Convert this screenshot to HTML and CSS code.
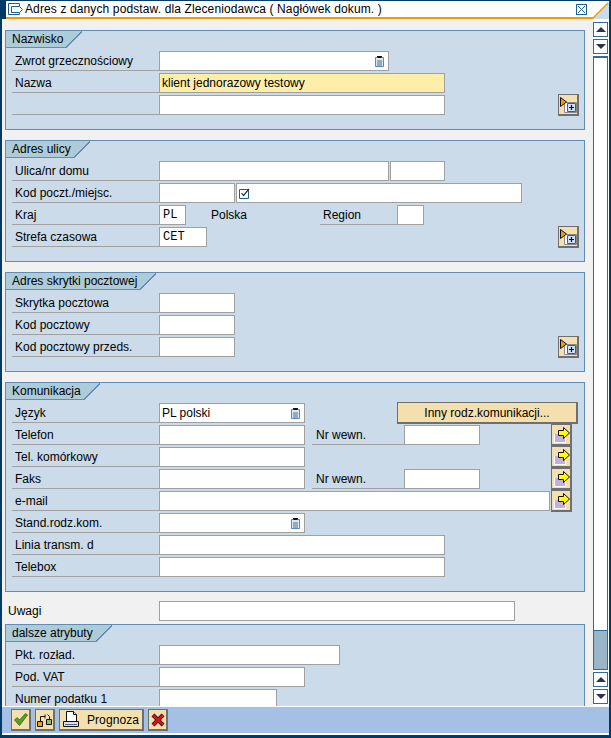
FILE: index.html
```html
<!DOCTYPE html>
<html lang="pl">
<head>
    <meta charset="UTF-8">
    <title>Adres z danych podstaw.</title>
    <link rel="stylesheet" href="styles.css">
</head>
<body>
<svg class="defs" width="0" height="0">
    <symbol id="i-f4" viewBox="0 0 9 11">
        <path d="M.5 1.500h8v9h-8z" fill="#dce8f4" stroke="#5a8ab8"/>
        <path d="M2 5h5M2 7h5M2 9h5" stroke="#4a7096"/>
        <path d="M2 0h5v1l-1 1H3L2 1z" fill="#111"/>
    </symbol>
    <symbol id="i-more" viewBox="0 0 17 16">
        <path d="M4.500 5.500h12v10h-12z" fill="#fff" stroke="#8a8a8a"/>
        <path d="M7.500 6.500h8v8h-8z" fill="#cfe0f2" stroke="#2c5f9e"/>
        <path d="M11.500 8v5M9 10.500h5" stroke="#00008b" stroke-width="1.200"/>
        <path d="M.5 .5l6 4.500-6 4.500z" fill="#f59b00" stroke="#111"/>
    </symbol>
    <symbol id="i-jump" viewBox="0 0 17 17">
        <path d="M1 8h12v9H1z" fill="#fff"/>
        <path d="M2 8h10v8H2z" fill="#c4b0dc"/>
        <path d="M5.500 4.500h5V1.500l6 5.500-6 5.500V9.500h-5z" fill="#ffff00" stroke="#111"/>
    </symbol>
</svg>

<div class="window">
    <div class="titlebar">
        <div class="title-edge"></div>
        <svg class="title-icon" width="16" height="13" viewBox="0 0 16 13">
            <path d="M11.500 3.500V.5H.5v11h11V9.500" fill="none" stroke="#1f5f8f"/>
            <path d="M3.500 3.500h8l3 3-3 3h-8z" fill="#fff" stroke="#1f5f8f"/>
        </svg>
        <div class="title-text">Adres z danych podstaw. dla Zleceniodawca ( Nagłówek dokum. )</div>
        <div class="close-btn">
            <svg width="7" height="7" viewBox="0 0 7 7"><path d="M0 0l7 7M7 0l-7 7" stroke="#1f5f8f"/></svg>
        </div>
        <svg class="corner" width="17" height="18" viewBox="0 0 17 18">
            <path d="M0 18L17 1V18z" fill="#c9dcec"/>
            <path d="M0 18L16 2" stroke="#f59b00" stroke-width="1.500"/>
        </svg>
    </div>

    <div class="main">
        <div class="content">
            <div class="panel">
                <div class="tab"><span>Nazwisko</span></div>
                <div class="row">
                    <div class="label">Zwrot grzecznościowy</div>
                    <div class="field w230 has-f4"><svg class="f4" width="9" height="11"><use href="#i-f4"/></svg></div>
                </div>
                <div class="row">
                    <div class="label">Nazwa</div>
                    <div class="field w286 required">klient jednorazowy testowy</div>
                </div>
                <div class="row">
                    <div class="label"></div>
                    <div class="field w286"></div>
                    <div class="btn icon-btn push"><svg width="17" height="16"><use href="#i-more"/></svg></div>
                </div>
            </div>

            <div class="panel">
                <div class="tab"><span>Adres ulicy</span></div>
                <div class="row">
                    <div class="label">Ulica/nr domu</div>
                    <div class="field w230"></div>
                    <div class="field w55 next"></div>
                </div>
                <div class="row">
                    <div class="label">Kod poczt./miejsc.</div>
                    <div class="field w76"></div>
                    <div class="field w286 next">
                        <svg width="11" height="11" viewBox="0 0 11 11">
                            <path d="M.5 1.500h9v9h-9z" fill="#fff" stroke="#1f5f8f"/>
                            <path d="M2.500 5l2 2.500 5.500-6.500" fill="none" stroke="#333" stroke-width="1.200"/>
                        </svg>
                    </div>
                </div>
                <div class="row">
                    <div class="label">Kraj</div>
                    <div class="field w27 mono">PL</div>
                    <div class="desc">Polska</div>
                    <div class="label w77">Region</div>
                    <div class="field w27"></div>
                </div>
                <div class="row">
                    <div class="label">Strefa czasowa</div>
                    <div class="field w48 mono">CET</div>
                    <div class="btn icon-btn push"><svg width="17" height="16"><use href="#i-more"/></svg></div>
                </div>
            </div>

            <div class="panel">
                <div class="tab"><span>Adres skrytki pocztowej</span></div>
                <div class="row">
                    <div class="label">Skrytka pocztowa</div>
                    <div class="field w76"></div>
                </div>
                <div class="row">
                    <div class="label">Kod pocztowy</div>
                    <div class="field w76"></div>
                </div>
                <div class="row">
                    <div class="label">Kod pocztowy przeds.</div>
                    <div class="field w76"></div>
                    <div class="btn icon-btn push"><svg width="17" height="16"><use href="#i-more"/></svg></div>
                </div>
            </div>

            <div class="panel">
                <div class="tab"><span>Komunikacja</span></div>
                <div class="row">
                    <div class="label">Język</div>
                    <div class="field w146 has-f4">PL polski<svg class="f4" width="9" height="11"><use href="#i-f4"/></svg></div>
                    <div class="btn wide-btn">Inny rodz.komunikacji...</div>
                </div>
                <div class="row">
                    <div class="label">Telefon</div>
                    <div class="field w146"></div>
                    <div class="label w92 ext">Nr wewn.</div>
                    <div class="field w76"></div>
                    <div class="btn icon-btn after-ext"><svg width="17" height="17"><use href="#i-jump"/></svg></div>
                </div>
                <div class="row">
                    <div class="label">Tel. komórkowy</div>
                    <div class="field w146"></div>
                    <div class="btn icon-btn after-phone"><svg width="17" height="17"><use href="#i-jump"/></svg></div>
                </div>
                <div class="row">
                    <div class="label">Faks</div>
                    <div class="field w146"></div>
                    <div class="label w92 ext">Nr wewn.</div>
                    <div class="field w76"></div>
                    <div class="btn icon-btn after-ext"><svg width="17" height="17"><use href="#i-jump"/></svg></div>
                </div>
                <div class="row">
                    <div class="label">e-mail</div>
                    <div class="field w391"></div>
                    <div class="btn icon-btn next"><svg width="17" height="17"><use href="#i-jump"/></svg></div>
                </div>
                <div class="row">
                    <div class="label">Stand.rodz.kom.</div>
                    <div class="field w146 has-f4"><svg class="f4" width="9" height="11"><use href="#i-f4"/></svg></div>
                </div>
                <div class="row">
                    <div class="label">Linia transm. d</div>
                    <div class="field w286"></div>
                </div>
                <div class="row">
                    <div class="label">Telebox</div>
                    <div class="field w286"></div>
                </div>
            </div>

            <div class="row loose">
                <div class="loose-label">Uwagi</div>
                <div class="field w356"></div>
            </div>

            <div class="panel last">
                <div class="tab"><span>dalsze atrybuty</span></div>
                <div class="row">
                    <div class="label">Pkt. rozład.</div>
                    <div class="field w181"></div>
                </div>
                <div class="row">
                    <div class="label">Pod. VAT</div>
                    <div class="field w146"></div>
                </div>
                <div class="row">
                    <div class="label">Numer podatku 1</div>
                    <div class="field w118"></div>
                </div>
            </div>
        </div>

        <div class="scrollbar">
            <div class="sb-btn"><span class="arrow-up"></span></div>
            <div class="sb-btn"><span class="arrow-down"></span></div>
            <div class="sb-track"></div>
            <div class="sb-thumb"></div>
            <div class="sb-btn"><span class="arrow-up"></span></div>
            <div class="sb-btn"><span class="arrow-down"></span></div>
        </div>
    </div>

    <div class="toolbar">
        <div class="btn tool-btn">
            <svg width="14" height="13" viewBox="0 0 14 13"><path d="M.5 7l2.500-2.500 2.500 2.500L11.500 .5l2 1.500L5.500 12.500z" fill="#5fa01e" stroke="#2f5f10" stroke-width=".8"/></svg>
        </div>
        <div class="btn tool-btn">
            <svg width="17" height="16" viewBox="0 0 17 16">
                <path d="M4.500 9V4.500H9M9 2.500v4M11.500 2.500l2 2v4" fill="none" stroke="#111"/>
                <path d="M10.500 7.500h5v5h-5z" fill="#9ab86a" stroke="#111"/>
                <path d="M1.500 9.500h5v5h-5z" fill="#f2a020" stroke="#111"/>
            </svg>
        </div>
        <div class="btn print-btn">
            <svg width="16" height="17" viewBox="0 0 16 17">
                <path d="M3.500 .5h7l3 3v8h-10z" fill="#fff" stroke="#111"/>
                <path d="M10.500 .5v3h3" fill="#c8d8ec" stroke="#111"/>
                <path d="M.5 10.500h15v5h-15z" fill="#cfe0f2" stroke="#111"/>
                <path d="M2 13.500h12" stroke="#5a6a80"/>
            </svg>
            <span>Prognoza</span>
        </div>
        <div class="btn tool-btn">
            <svg width="14" height="14" viewBox="0 0 14 14"><path d="M2 2l10 10M12 2L2 12" stroke="#111" stroke-width="4"/><path d="M2 2l10 10M12 2L2 12" stroke="#e01010" stroke-width="2.500"/></svg>
        </div>
    </div>
</div>
</body>
</html>
```

FILE: styles.css
```css
*{
    box-sizing: border-box;
    margin: 0;
    padding: 0;
}
body{
    font-family: "Liberation Sans", Arial, sans-serif;
    font-size: 12px;
    color: #000;
    overflow: hidden;
}
.defs{
    display: block;
}
.window{
    width: 611px;
    height: 738px;
    display: flex;
    flex-direction: column;
    background-color: #f1f1f1;
    border-right: 2px solid #003a66;
    border-left: 2px solid #003a66;
    border-bottom: 3px solid #003a66;
}

/* title */
.titlebar{
    height: 19px;
    margin-left: -2px;
    display: flex;
    align-items: center;
    flex: none;
    background-color: #fff;
    border-top: 1px solid #003a66;
    border-bottom: 2px solid #f59b00;
}
.title-edge{
    width: 6px;
    height: 19px;
    background-color: #003a66;
}
.title-icon{
    margin-left: 2px;
}
.title-text{
    margin-left: 1px;
    letter-spacing: .12px;
    white-space: nowrap;
}
.close-btn{
    width: 11px;
    height: 11px;
    margin-left: auto;
    margin-right: 5px;
    display: flex;
    align-items: center;
    justify-content: center;
    border: 1px solid #1f5f8f;
}
.corner{
    flex: none;
    margin-right: 0;
    align-self: flex-end;
    margin-bottom: -2px;
}

/* main area */
.main{
    flex: 1;
    display: flex;
    min-height: 0;
}
.content{
    width: 591px;
    padding: 11px 0 0 3px;
    overflow: hidden;
}
.panel{
    width: 580px;
    margin-bottom: 10px;
    padding-bottom: 12px;
    background-color: #cbdbea;
    border: 1px solid #5f8db8;
}
.tab{
    height: 17px;
    margin-bottom: 3px;
    display: flex;
    line-height: 16px;
}
.tab span{
    padding: 0 2px 0 6px;
    background-color: #aecbd8;
    border-bottom: 1px solid #5f8db8;
}
.tab::after{
    content: "";
    width: 17px;
    height: 17px;
    background: linear-gradient(to bottom right, #aecbd8 49%, #5f8db8 49%, #5f8db8 53%, transparent 53%);
}
.row{
    height: 22px;
    padding: 0 5px 0 6px;
    display: flex;
    align-items: flex-start;
}
.label{
    width: 147px;
    height: 20px;
    flex: none;
    padding-left: 3px;
    line-height: 21px;
    border-bottom: 1px solid #a0a0a0;
    white-space: nowrap;
}
.label.w77{
    width: 77px;
}
.label.w92{
    width: 92px;
    padding-left: 4px;
}
.ext{
    margin-left: 7px;
}
.desc{
    width: 109px;
    margin-left: 25px;
    line-height: 21px;
}
.loose{
    margin-bottom: 1px;
    padding-left: 3px;
    margin-top: -1px;
}
.loose-label{
    width: 151px;
    line-height: 21px;
}

.field{
    height: 20px;
    flex: none;
    display: flex;
    align-items: center;
    padding: 0 2px;
    background-color: #fff;
    border: 1px solid #a0a0a0;
    white-space: nowrap;
}
.required{
    background-color: #ffeea8;
}
.mono{
    font-family: "Liberation Mono", "Courier New", monospace;
    padding-left: 3px;
}
.has-f4{
    justify-content: space-between;
}
.f4{
    margin-left: auto;
    margin-right: 2px;
}
.next{
    margin-left: 1px;
}
.w27{ width: 27px; }
.w48{ width: 48px; }
.w55{ width: 55px; }
.w76{ width: 76px; }
.w118{ width: 118px; }
.w146{ width: 146px; }
.w181{ width: 181px; }
.w230{ width: 230px; }
.w286{ width: 286px; }
.w356{ width: 356px; }
.w391{ width: 391px; }

/* buttons */
.btn{
    height: 22px;
    flex: none;
    display: flex;
    align-items: center;
    justify-content: center;
    margin-top: -1px;
    background-color: #f3e0ae;
    border: 1px solid #6f6f6f;
    border-right-width: 2px;
    border-bottom-width: 2px;
}
.icon-btn{
    width: 21px;
}
.push{
    margin-left: auto;
}
.wide-btn{
    width: 181px;
    margin-left: 92px;
}
.after-ext{
    margin-left: 71px;
}
.after-phone{
    margin-left: 246px;
}

/* scrollbar */
.scrollbar{
    width: 16px;
    padding-top: 3px;
    display: flex;
    flex-direction: column;
    background-color: #fff;
}
.sb-btn{
    width: 15px;
    height: 15px;
    flex: none;
    margin-bottom: 2px;
    display: flex;
    align-items: center;
    justify-content: center;
    background-color: #fff;
    border: 1px solid #336b98;
}
.arrow-up{
    border: 5px solid transparent;
    border-top: 0;
    border-bottom: 5px solid #2c3350;
}
.arrow-down{
    border: 5px solid transparent;
    border-bottom: 0;
    border-top: 5px solid #2c3350;
}
.sb-track{
    width: 15px;
    flex: 1;
    background-color: #fff;
    border: 1px solid #336b98;
    border-top-width: 2px;
    border-bottom: 0;
}
.sb-thumb{
    width: 15px;
    height: 40px;
    flex: none;
    margin-bottom: 2px;
    background-color: #9ab5c8;
    border: 1px solid #336b98;
}

/* bottom toolbar */
.toolbar{
    height: 29px;
    flex: none;
    display: flex;
    align-items: center;
    gap: 4px;
    padding-left: 9px;
    background-color: #a4c0e4;
    border-top: 1px solid #fff;
    border-bottom: 2px solid #fff;
}
.toolbar .btn{
    margin-top: 0;
}
.tool-btn{
    width: 20px;
}
.print-btn{
    width: 85px;
    gap: 8px;
    letter-spacing: .1px;
}
```
